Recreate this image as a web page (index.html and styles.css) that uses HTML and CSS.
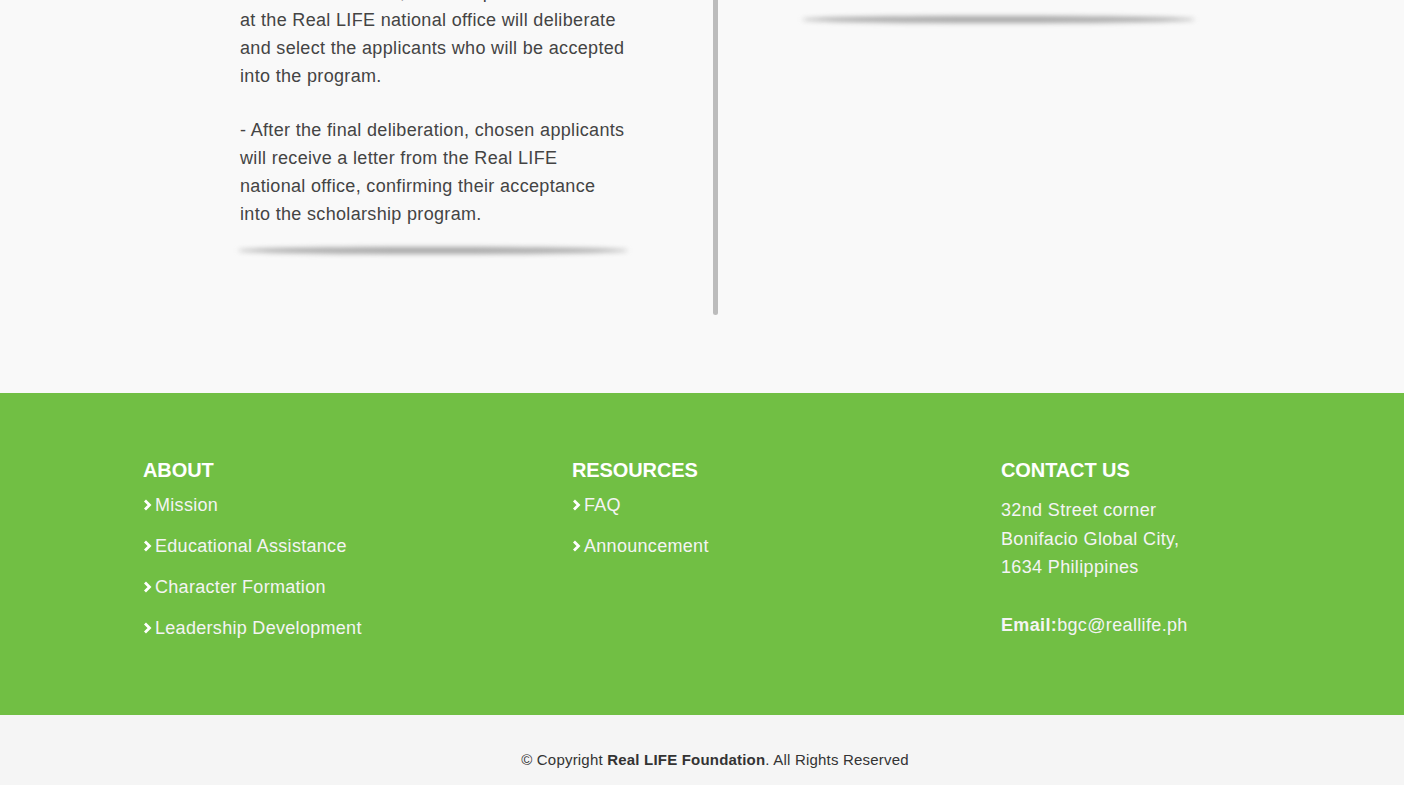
FILE: index.html
```html
<!DOCTYPE html>
<html lang="en">
<head>
<meta charset="utf-8">
<title>Real LIFE Foundation</title>
<link rel="stylesheet" href="styles.css">
</head>
<body>
<main class="steps">
  <div class="col col-left">
    <p class="para">- After the interview, the staff panel<br>at the Real LIFE national office will deliberate and select the applicants who will be accepted into the program.</p>
    <p class="para">- After the final deliberation, chosen applicants will receive a letter from the Real LIFE national office, confirming their acceptance into the scholarship program.</p>
    <div class="shadow"></div>
  </div>
  <div class="divider"></div>
  <div class="col col-right">
    <div class="shadow shadow-top"></div>
  </div>
</main>

<footer class="footer">
  <div class="footer-grid">
    <section class="fcol">
      <h3 class="fhead">ABOUT</h3>
      <ul class="links">
        <li><svg class="chev" viewBox="0 0 8 12"><polyline points="1.5,1.5 6,6 1.5,10.5"/></svg>Mission</li>
        <li><svg class="chev" viewBox="0 0 8 12"><polyline points="1.5,1.5 6,6 1.5,10.5"/></svg>Educational Assistance</li>
        <li><svg class="chev" viewBox="0 0 8 12"><polyline points="1.5,1.5 6,6 1.5,10.5"/></svg>Character Formation</li>
        <li><svg class="chev" viewBox="0 0 8 12"><polyline points="1.5,1.5 6,6 1.5,10.5"/></svg>Leadership Development</li>
      </ul>
    </section>
    <section class="fcol">
      <h3 class="fhead">RESOURCES</h3>
      <ul class="links">
        <li><svg class="chev" viewBox="0 0 8 12"><polyline points="1.5,1.5 6,6 1.5,10.5"/></svg>FAQ</li>
        <li><svg class="chev" viewBox="0 0 8 12"><polyline points="1.5,1.5 6,6 1.5,10.5"/></svg>Announcement</li>
      </ul>
    </section>
    <section class="fcol">
      <h3 class="fhead">CONTACT US</h3>
      <p class="address">32nd Street corner<br>Bonifacio Global City,<br>1634 Philippines</p>
      <p class="email"><b>Email:</b>bgc@reallife.ph</p>
    </section>
  </div>
</footer>

<div class="copyright">© Copyright <b>Real LIFE Foundation</b>. All Rights Reserved</div>
</body>
</html>
```

FILE: styles.css
```css
* { box-sizing: border-box; }

html, body {
  margin: 0;
  padding: 0;
  font-family: "Liberation Sans", Arial, sans-serif;
  background: #f9f9f9;
  overflow: hidden;
}

.steps {
  display: flex;
  align-items: flex-start;
  height: 393px;
  padding-left: 240px;
  background: #f9f9f9;
  overflow: hidden;
}

.col-left {
  width: 386px;
  margin-top: -22px;
}

.para {
  margin: 0 0 26px;
  font-size: 18px;
  line-height: 28px;
  color: #444;
  letter-spacing: 0.33px;
}

.para:last-of-type { margin-bottom: 0; }

.shadow {
  width: 390px;
  height: 7px;
  margin: 19px 0 0 -2px;
  background: #a8a8a8;
  border-radius: 50%;
  filter: blur(2.5px);
}

.shadow-top {
  margin: 16px 0 0 0;
  width: 393px;
}

.divider {
  width: 5px;
  height: 315px;
  margin-left: 87px;
  background: #bcbcbc;
  border-radius: 0 0 3px 3px;
}

.col-right {
  width: 393px;
  margin-left: 84px;
}

.footer {
  background: #71bf44;
  height: 322px;
  padding: 65px 0 0 143px;
  color: #fff;
}

.footer-grid {
  display: grid;
  grid-template-columns: 429px 429px auto;
}

.fhead {
  margin: 0 0 12px;
  font-size: 20px;
  line-height: 24px;
  font-weight: 700;
  letter-spacing: -0.1px;
  color: #fff;
}

.links {
  list-style: none;
  margin: 0;
  padding: 0;
  display: flex;
  flex-direction: column;
  gap: 19px;
}

.links li {
  display: flex;
  align-items: center;
  font-size: 18px;
  line-height: 22px;
  color: #f4f4f4;
  letter-spacing: 0.3px;
}

.chev {
  width: 9px;
  height: 12px;
  margin-right: 3px;
  fill: none;
  stroke: #fff;
  stroke-width: 2.8;
}

.address {
  margin: 14px 0 0;
  font-size: 18px;
  line-height: 28.5px;
  color: #f4f4f4;
  letter-spacing: 0.35px;
}

.email {
  margin: 29px 0 0;
  font-size: 18px;
  line-height: 28px;
  color: #f4f4f4;
  letter-spacing: 0.35px;
}

.copyright {
  height: 70px;
  padding-top: 36px;
  padding-left: 26px;
  background: #f5f5f5;
  text-align: center;
  font-size: 15px;
  line-height: 18px;
  color: #333;
  letter-spacing: 0.2px;
}
```
